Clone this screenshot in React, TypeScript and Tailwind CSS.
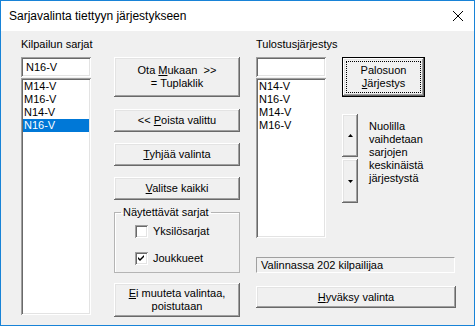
import React from "react";

const raised =
  "shadow-[inset_-1px_-1px_#696969,inset_1px_1px_#ffffff,inset_-2px_-2px_#a0a0a0,inset_2px_2px_#e3e3e3]";
const sunken =
  "shadow-[inset_1px_1px_#a0a0a0,inset_-1px_-1px_#ffffff,inset_2px_2px_#696969,inset_-2px_-2px_#e3e3e3]";

function Btn({ className = "", children }: { className?: string; children: React.ReactNode }) {
  return (
    <div
      className={
        "bg-[#f0f0f0] flex flex-col items-center justify-center text-center leading-[13px] whitespace-nowrap " +
        raised +
        " " +
        className
      }
    >
      {children}
    </div>
  );
}

function Check({ checked, label }: { checked: boolean; label: string }) {
  return (
    <div className="flex items-center h-[13px]">
      <div className={"w-[13px] h-[13px] shrink-0 bg-white flex items-center justify-center " + sunken}>
        {checked && (
          <svg width="7" height="7" viewBox="0 0 7 7">
            <path d="M0 2 L2 4 L6 0 L6 2 L2 6 L0 4 Z" fill="#000" />
          </svg>
        )}
      </div>
      <span className="ml-[5px] whitespace-nowrap">{label}</span>
    </div>
  );
}

export default function App() {
  const left = ["M14-V", "M16-V", "N14-V", "N16-V"];
  const right = ["N14-V", "N16-V", "M14-V", "M16-V"];
  return (
    <div className="w-[475px] h-[326px] border border-[#1883d7] bg-[#f0f0f0] flex flex-col font-['Liberation_Sans',Arial,sans-serif] text-[11px] text-black overflow-hidden">
      <div className="h-[30px] bg-white flex items-center pl-[8px] pr-[11px] shrink-0">
        <span className="text-[12px] flex-1">Sarjavalinta tiettyyn järjestykseen</span>
        <svg width="10" height="10" viewBox="0 0 10 10">
          <path d="M0 0 L10 10 M10 0 L0 10" stroke="#000" strokeWidth="1" />
        </svg>
      </div>
      <div className="flex flex-1 pl-[20px]">
        {/* Column 1 */}
        <div className="w-[70px] flex flex-col pt-[6px]">
          <div className="h-[14px] leading-[14px] whitespace-nowrap">Kilpailun sarjat</div>
          <div className={"mt-[6px] h-[20px] bg-white px-[5px] flex items-center " + sunken}>N16-V</div>
          <div className={"mt-[1px] h-[237px] bg-white p-[2px] flex flex-col " + sunken}>
            {left.map((s, i) => (
              <div
                key={s}
                className={
                  "h-[13px] leading-[13px] pl-[1px] " +
                  (i === 3 ? "bg-[#0078d7] text-white" : "")
                }
              >
                {s}
              </div>
            ))}
          </div>
        </div>

        {/* Column 2 */}
        <div className="w-[126px] ml-[23px] flex flex-col pt-[26px]">
          <Btn className="h-[40px]">
            <span className="whitespace-pre">
              Ota <u>M</u>ukaan  {">>"}
            </span>
            <span>= Tuplaklik</span>
          </Btn>
          <Btn className="h-[23px] mt-[12px]">
            <span>
              {"<< "}
              <u>P</u>oista valittu
            </span>
          </Btn>
          <Btn className="h-[23px] mt-[11px]">
            <span>
              <u>T</u>yhjää valinta
            </span>
          </Btn>
          <Btn className="h-[23px] mt-[11px]">
            <span>
              <u>V</u>alitse kaikki
            </span>
          </Btn>
          <fieldset className="mt-[6px] h-[67px] min-w-0 p-0 border border-[#b4b4b4] shadow-[inset_1px_1px_#ffffff]">
            <legend className="ml-[6px] px-[2px] leading-[13px] whitespace-nowrap">Näytettävät sarjat</legend>
            <div className="mt-[6px] ml-[20px]">
              <Check checked={false} label="Yksilösarjat" />
            </div>
            <div className="mt-[14px] ml-[20px]">
              <Check checked={true} label="Joukkueet" />
            </div>
          </fieldset>
          <Btn className="h-[34px] mt-[10px]">
            <span>
              <u>E</u>i muuteta valintaa,
            </span>
            <span>poistutaan</span>
          </Btn>
        </div>

        {/* Column 3 */}
        <div className="w-[200px] ml-[16px] flex flex-col pt-[6px]">
          <div className="h-[14px] leading-[14px] whitespace-nowrap">Tulostusjärjestys</div>
          <div className="flex mt-[6px]">
            <div className="w-[70px] flex flex-col">
              <div className={"h-[20px] bg-white " + sunken}></div>
              <div className={"mt-[1px] h-[160px] bg-white p-[2px] flex flex-col " + sunken}>
                {right.map((s) => (
                  <div key={s} className="h-[13px] leading-[13px] pl-[1px]">
                    {s}
                  </div>
                ))}
              </div>
            </div>
            <div className="ml-[16px] flex flex-col">
              <div className="w-[83px] h-[40px] border border-black relative">
                <Btn className="w-full h-full">
                  <span>Palosuon</span>
                  <span>
                    <u>J</u>ärjestys
                  </span>
                </Btn>
                <div className="absolute inset-[3px] border border-dotted border-black pointer-events-none"></div>
              </div>
              <div className="flex mt-[17px]">
                <div className="flex flex-col">
                  <Btn className="w-[16px] h-[43px]">
                    <svg width="5" height="3" viewBox="0 0 5 3">
                      <path d="M2.5 0 L5 3 L0 3 Z" fill="#000" />
                    </svg>
                  </Btn>
                  <Btn className="w-[16px] h-[44px] mt-[2px]">
                    <svg width="5" height="3" viewBox="0 0 5 3">
                      <path d="M0 0 L5 0 L2.5 3 Z" fill="#000" />
                    </svg>
                  </Btn>
                </div>
                <div className="ml-[11px] mt-[6px] leading-[13px] whitespace-nowrap">
                  <div>Nuolilla</div>
                  <div>vaihdetaan</div>
                  <div>sarjojen</div>
                  <div>keskinäistä</div>
                  <div>järjestystä</div>
                </div>
              </div>
            </div>
          </div>
          <div className="mt-[19px] h-[16px] w-[199px] border-t border-l border-[#a0a0a0] border-r-white border-b-white border-r border-b pl-[4px] leading-[14px]">
            Valinnassa 202 kilpailijaa
          </div>
          <Btn className="mt-[13px] h-[22px] w-[200px]">
            <span>
              <u>H</u>yväksy valinta
            </span>
          </Btn>
        </div>
      </div>
    </div>
  );
}
